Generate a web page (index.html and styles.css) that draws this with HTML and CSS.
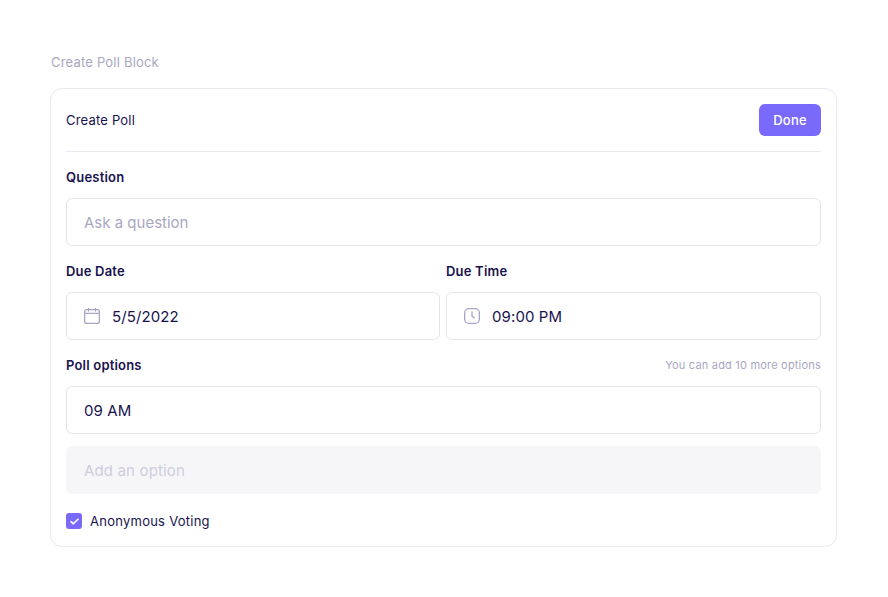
FILE: index.html
```html
<!DOCTYPE html>
<html lang="en">
<head>
    <meta charset="UTF-8">
    <meta name="viewport" content="width=device-width, initial-scale=1.0">
    <title>Create Poll Block</title>
    <link rel="stylesheet" href="styles.css">
</head>
<body>
    <p class="block-title">Create Poll Block</p>

    <div class="card">
        <div class="card-header">
            <span class="card-title">Create Poll</span>
            <button class="done-btn">Done</button>
        </div>

        <div class="field-label field-label-first">Question</div>
        <div class="input placeholder">Ask a question</div>

        <div class="due-row">
            <div class="due-col">
                <div class="field-label">Due Date</div>
                <div class="input">
                    <svg class="input-icon" width="16" height="16" viewBox="0 0 16 16" fill="none" stroke="#a9a5c2" stroke-width="1.3">
                        <rect x=".65" y="1.6" width="14.7" height="13.75" rx="2.2"/>
                        <path d="M.65 5.4h14.7M4.5 .4v2.6M11.5 .4v2.6" stroke-linecap="round"/>
                    </svg>
                    5/5/2022
                </div>
            </div>
            <div class="due-col">
                <div class="field-label">Due Time</div>
                <div class="input">
                    <svg class="input-icon" width="16" height="16" viewBox="0 0 16 16" fill="none" stroke="#a9a5c2" stroke-width="1.3">
                        <rect x=".65" y=".65" width="14.7" height="14.7" rx="4.2"/>
                        <path d="M8 3.8v4.4l2.4 1.6" stroke-linecap="round" stroke-linejoin="round"/>
                    </svg>
                    09:00 PM
                </div>
            </div>
        </div>

        <div class="options-head">
            <div class="field-label">Poll options</div>
            <span class="options-hint">You can add 10 more options</span>
        </div>
        <div class="input">09 AM</div>
        <div class="input input-disabled">Add an option</div>

        <label class="check-row">
            <span class="checkbox">
                <svg width="9" height="7" viewBox="0 0 9 7" fill="none" stroke="#fff" stroke-width="1.6">
                    <path d="M1 3.7l2.3 2.1L8 1.2" stroke-linecap="round" stroke-linejoin="round"/>
                </svg>
            </span>
            Anonymous Voting
        </label>
    </div>
</body>
</html>
```

FILE: styles.css
```css
* {
    margin: 0;
    padding: 0;
    box-sizing: border-box;
}

body {
    font-family: Inter, "Noto Sans", sans-serif;
    background-color: #fff;
    color: #18134e;
    letter-spacing: 0.2px;
    padding: 53px 51px 50px 50px;
}

.block-title {
    font-size: 13px;
    line-height: 18px;
    color: #a9a7bf;
    margin-bottom: 17px;
    padding-left: 1px;
}

/* Main card */
.card {
    border: 1px solid #e8e8ee;
    border-radius: 12px;
    padding: 15px 15px 17px;
}

.card-header {
    display: flex;
    justify-content: space-between;
    align-items: center;
    padding-bottom: 15px;
    border-bottom: 1px solid #e8e8ee;
}

.card-title {
    font-size: 13px;
}

.done-btn {
    width: 62px;
    height: 32px;
    border: none;
    border-radius: 6px;
    background: #7a6afc;
    color: #fff;
    font-family: inherit;
    font-size: 13px;
    font-weight: 500;
    letter-spacing: inherit;
}

.field-label {
    font-size: 13px;
    font-weight: 600;
    line-height: 18px;
    margin-bottom: 12px;
}

.field-label-first {
    margin-top: 16px;
}

.input {
    display: flex;
    align-items: center;
    height: 48px;
    padding: 0 17px;
    border: 1px solid #e5e5ec;
    border-radius: 6px;
    font-size: 15px;
    letter-spacing: 0.1px;
}

.placeholder {
    color: #a9a7bf;
    letter-spacing: 0;
}

.input-icon {
    margin-right: 12px;
    flex-shrink: 0;
}

.due-row {
    display: grid;
    grid-template-columns: 374px 1fr;
    gap: 6px;
    margin-top: 16px;
}

.options-head {
    display: flex;
    justify-content: space-between;
    align-items: center;
    margin-top: 16px;
}

.options-hint {
    font-size: 11px;
    color: #a9a7bf;
    margin-bottom: 12px;
}

.input-disabled {
    margin-top: 12px;
    background: #f6f6f9;
    border-color: #f6f6f9;
    color: #cfcddc;
    letter-spacing: 0.15px;
}

.check-row {
    display: flex;
    align-items: center;
    gap: 8px;
    margin-top: 19px;
    font-size: 13px;
    line-height: 16px;
    letter-spacing: 0.25px;
}

.checkbox {
    display: flex;
    align-items: center;
    justify-content: center;
    width: 16px;
    height: 16px;
    border-radius: 3px;
    background: #7a6afc;
}
```
